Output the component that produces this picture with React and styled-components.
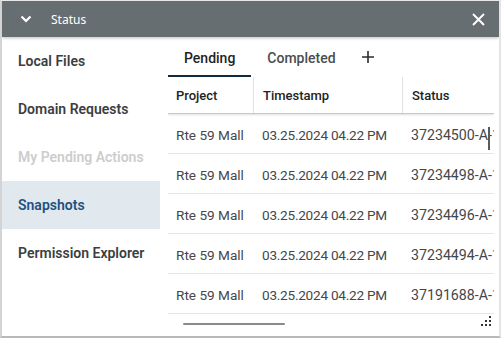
import React from 'react'
import styled, { createGlobalStyle } from 'styled-components'

const Global = createGlobalStyle`
  html, body {
    margin: 0;
    padding: 0;
    background: #ffffff;
  }
  * {
    box-sizing: border-box;
  }
`

const Window = styled.div`
  width: 501px;
  height: 338px;
  display: flex;
  flex-direction: column;
  background: #fff;
  border-left: 2px solid #d4d4d4;
  border-bottom: 2px solid #b9b9b9;
  border-right: 2px solid #e4e4e4;
  border-top: 1px solid #e8e8e8;
  overflow: hidden;
  font-family: Roboto, 'Liberation Sans', sans-serif;
`

const TitleBar = styled.div`
  height: 36px;
  flex: none;
  display: flex;
  align-items: center;
  background: #676e71;
  color: #fff;
  padding: 0 14px 0 18px;
  box-shadow: 0 1px 3px rgba(0, 0, 0, 0.25);
  position: relative;
  z-index: 1;
`

const Title = styled.span`
  font-family: 'Noto Sans', 'Open Sans', sans-serif;
  font-size: 12px;
  margin-left: 19px;
  flex: 1;
`

const IconButton = styled.span`
  display: flex;
  align-items: center;
  justify-content: center;
`

const Body = styled.div`
  flex: 1;
  display: flex;
  min-height: 0;
`

const Sidebar = styled.nav`
  width: 158px;
  flex: none;
  display: flex;
  flex-direction: column;
`

const NavItem = styled.div`
  height: 48px;
  display: flex;
  align-items: center;
  padding-left: 16px;
  font-size: 14px;
  font-weight: 600;
  color: ${({ disabled, active }) =>
    disabled ? '#cdcdcd' : active ? '#1d5282' : '#3b3e42'};
  background: ${({ active }) => (active ? '#e1e8ee' : 'transparent')};
`

const Content = styled.div`
  flex: 1;
  margin-left: 8px;
  display: flex;
  flex-direction: column;
  min-width: 0;
  position: relative;
`

const Tabs = styled.div`
  height: 40px;
  flex: none;
  display: flex;
  align-items: stretch;
`

const Tab = styled.div`
  padding: 4px 16px 0;
  display: flex;
  align-items: center;
  font-size: 14px;
  font-weight: 500;
  color: ${({ active }) => (active ? '#1f2326' : '#4a4d50')};
  border-bottom: 2px solid ${({ active }) => (active ? '#0f2c45' : 'transparent')};
`

const AddTab = styled.div`
  display: flex;
  align-items: center;
  padding: 0 0 0 9px;
  margin-top: -1px;
`

const TableClip = styled.div`
  width: 326px;
  overflow: hidden;
  position: relative;
`

const Row = styled.div`
  display: grid;
  grid-template-columns: 85px 149px 110px;
  height: ${({ header }) => (header ? 37 : 40)}px;
  border-bottom: 1px solid ${({ header }) => (header ? '#c8c8c8' : '#e6e6e6')};
  box-shadow: ${({ header }) => (header ? '0 1px 2px rgba(0,0,0,0.12)' : 'none')};
  width: 326px;
`

const Cell = styled.div`
  display: flex;
  align-items: center;
  padding-left: ${({ first }) => (first ? 8 : 9)}px;
  padding-top: ${({ header }) => (header ? 0 : 2)}px;
  font-size: ${({ header, wide }) => (header ? 13 : wide ? 14.2 : 13.6)}px;
  white-space: nowrap;
  overflow: hidden;
  color: ${({ header }) => (header ? '#202326' : '#44474a')};
  font-weight: ${({ header }) => (header ? 500 : 400)};
  border-left: ${({ header, first }) =>
    header && !first ? '1px solid #e2e2e2' : 'none'};
`

const Stamp = styled.span`
  letter-spacing: -0.25px;
`

const VThumb = styled.div`
  position: absolute;
  right: 4px;
  top: 50px;
  width: 2px;
  height: 23px;
  background: #5a5a5a;
`

const Footer = styled.div`
  flex: 1;
  position: relative;
`

const HThumb = styled.div`
  position: absolute;
  left: 15px;
  top: 9px;
  width: 102px;
  height: 2px;
  border-radius: 1px;
  background: #8a8a8a;
`

const Grip = styled.svg`
  position: absolute;
  right: 8px;
  top: 2px;
`

const rows = [
  '37234500-A-1',
  '37234498-A-1',
  '37234496-A-1',
  '37234494-A-1',
  '37191688-A-1',
]

const navItems = [
  { label: 'Local Files' },
  { label: 'Domain Requests' },
  { label: 'My Pending Actions', disabled: true },
  { label: 'Snapshots', active: true },
  { label: 'Permission Explorer' },
]

export default function App() {
  return (
    <>
      <Global />
      <Window>
        <TitleBar>
          <IconButton>
            <svg width="12" height="8" viewBox="0 0 12 8">
              <path d="M1.5 1.5 L6 6 L10.5 1.5" fill="none" stroke="#fff" strokeWidth="2.2" />
            </svg>
          </IconButton>
          <Title>Status</Title>
          <IconButton>
            <svg width="13" height="13" viewBox="0 0 13 13">
              <path d="M1 1 L12 12 M12 1 L1 12" stroke="#fff" strokeWidth="1.9" />
            </svg>
          </IconButton>
        </TitleBar>
        <Body>
          <Sidebar>
            {navItems.map((item) => (
              <NavItem key={item.label} disabled={item.disabled} active={item.active}>
                {item.label}
              </NavItem>
            ))}
          </Sidebar>
          <Content>
            <Tabs>
              <Tab active>Pending</Tab>
              <Tab>Completed</Tab>
              <AddTab>
                <svg width="14" height="14" viewBox="0 0 14 14">
                  <path d="M7 1 V13 M1 7 H13" stroke="#2a2d30" strokeWidth="1.6" />
                </svg>
              </AddTab>
            </Tabs>
            <TableClip>
              <Row header>
                <Cell header first>Project</Cell>
                <Cell header>Timestamp</Cell>
                <Cell header>Status</Cell>
              </Row>
              {rows.map((id) => (
                <Row key={id}>
                  <Cell first>Rte 59 Mall</Cell>
                  <Cell>
                    <Stamp>03.25.2024 04.22 PM</Stamp>
                  </Cell>
                  <Cell wide>{id}</Cell>
                </Row>
              ))}
              <VThumb />
            </TableClip>
            <Footer>
              <HThumb />
              <Grip width="10" height="10" viewBox="0 0 10 10">
                <rect x="8" y="0" width="2" height="2" fill="#333" />
                <rect x="4" y="4" width="2" height="2" fill="#333" />
                <rect x="8" y="4" width="2" height="2" fill="#333" />
                <rect x="0" y="8" width="2" height="2" fill="#333" />
                <rect x="4" y="8" width="2" height="2" fill="#333" />
                <rect x="8" y="8" width="2" height="2" fill="#333" />
              </Grip>
            </Footer>
          </Content>
        </Body>
      </Window>
    </>
  )
}
